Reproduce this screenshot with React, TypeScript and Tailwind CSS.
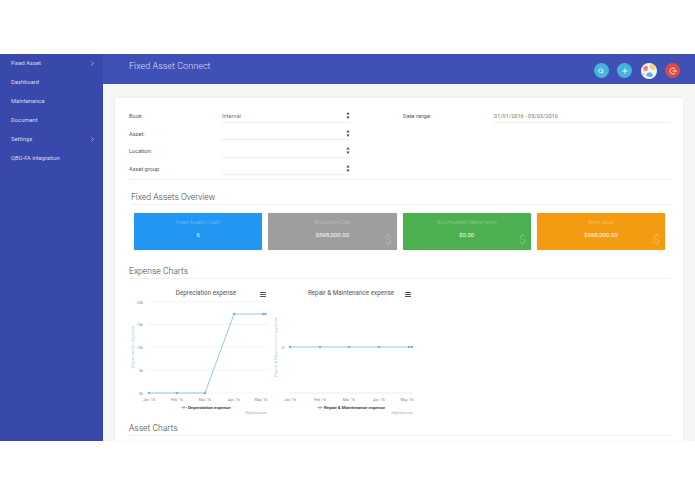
import { ChevronRight, Plus, Search } from "lucide-react";

const navItems = [
  { label: "Fixed Asset", arrow: true },
  { label: "Dashboard" },
  { label: "Maintenance" },
  { label: "Document" },
  { label: "Settings", arrow: true },
  { label: "QBO-FA integration" },
];

const selects = [
  { label: "Book:", value: "Internal" },
  { label: "Asset:", value: "" },
  { label: "Location:", value: "" },
  { label: "Asset group:", value: "" },
];

const stats = [
  { title: "Fixed Assets Count", value: "6", color: "bg-[#2196f3]", dollar: false },
  { title: "Acquisition Cost", value: "$868,000.00", color: "bg-[#9e9e9e]", dollar: true },
  { title: "Accumulated Depreciation", value: "$0.00", color: "bg-[#4caf50]", dollar: true },
  { title: "Book value", value: "$868,000.00", color: "bg-[#f39c12]", dollar: true },
];

const months = ["Jan '16", "Feb '16", "Mar '16", "Apr '16", "May '16"];

function Menu({ x }: { x: number }) {
  return (
    <g fill="#555">
      <rect x={x} y={7} width={6} height={1} />
      <rect x={x} y={9} width={6} height={1} />
      <rect x={x} y={11} width={6} height={1} />
    </g>
  );
}

function DepreciationChart() {
  const xs = [24, 52, 80, 109, 138, 140.5];
  const ys = [108, 108, 108, 29, 29, 29];
  const grid = [
    { y: 17, label: "20k" },
    { y: 39.5, label: "15k" },
    { y: 62, label: "10k" },
    { y: 85, label: "5k" },
    { y: 108, label: "0k" },
  ];
  return (
    <svg width="146" height="132" viewBox="0 0 146 132" className="shrink-0">
      <text x="81" y="10" textAnchor="middle" fontSize="6.3" fill="#555">Depreciation expense</text>
      <Menu x={135} />
      {grid.map((g) => (
        <g key={g.y}>
          <line x1="23" x2="143" y1={g.y} y2={g.y} stroke="#eceff3" strokeWidth="0.7" />
          <text x="18" y={g.y + 1.5} textAnchor="end" fontSize="3.8" fill="#888">{g.label}</text>
        </g>
      ))}
      <text transform="translate(8.5 62) rotate(-90)" textAnchor="middle" fontSize="4.4" fill="#a9d3f2">Depreciation expense</text>
      <polyline points={xs.map((x, i) => `${x},${ys[i]}`).join(" ")} fill="none" stroke="#8fbfea" strokeWidth="0.9" />
      {xs.map((x, i) => (
        <circle key={i} cx={x} cy={ys[i]} r="1.3" fill="#7cb5ec" />
      ))}
      {months.map((m, i) => (
        <text key={m} x={[24, 52, 80, 109, 136][i]} y="115.5" textAnchor="middle" fontSize="3.8" fill="#888">{m}</text>
      ))}
      <circle cx="59" cy="122.5" r="1.2" fill="#7cb5ec" />
      <line x1="56" x2="62" y1="122.5" y2="122.5" stroke="#7cb5ec" strokeWidth="0.7" />
      <text x="63" y="124" fontSize="4.4" fontWeight="700" fill="#444">Depreciation expense</text>
      <text x="142" y="129" textAnchor="end" fontSize="3" fill="#aaa">Highcharts.com</text>
    </svg>
  );
}

function RepairChart() {
  const xs = [19, 49, 78, 108, 138, 141];
  return (
    <svg width="146" height="132" viewBox="0 0 146 132" className="shrink-0">
      <text x="80" y="10" textAnchor="middle" fontSize="6.3" fill="#555">Repair &amp; Maintenance expense</text>
      <Menu x={134} />
      <text transform="translate(6 62) rotate(-90)" textAnchor="middle" fontSize="4.4" fill="#a9d3f2">Repair &amp; Maintenance expense</text>
      <text x="13" y="63.5" textAnchor="end" fontSize="3.8" fill="#888">0</text>
      <line x1="18" x2="142" y1="108" y2="108" stroke="#d8dde6" strokeWidth="0.6" />
      <line x1="18" x2="142" y1="62" y2="62" stroke="#8fbfea" strokeWidth="0.9" />
      {xs.map((x) => (
        <circle key={x} cx={x} cy="62" r="1.3" fill="#7cb5ec" />
      ))}
      {months.map((m, i) => (
        <text key={m} x={[19, 49, 78, 108, 136][i]} y="115.5" textAnchor="middle" fontSize="3.8" fill="#888">{m}</text>
      ))}
      <circle cx="49" cy="122.5" r="1.2" fill="#7cb5ec" />
      <line x1="46" x2="52" y1="122.5" y2="122.5" stroke="#7cb5ec" strokeWidth="0.7" />
      <text x="53" y="124" fontSize="4.4" fontWeight="700" fill="#444">Repair &amp; Maintenance expense</text>
      <text x="142" y="129" textAnchor="end" fontSize="3" fill="#aaa">Highcharts.com</text>
    </svg>
  );
}

function Avatar() {
  return (
    <svg width="16" height="16" viewBox="0 0 16 16">
      <circle cx="8" cy="8" r="8" fill="#f4f4f4" />
      <path d="M3 3.5 C5 2 7 3 7 5 C7 7 5 9 3.5 8 C2 7 2 4.5 3 3.5Z" fill="#ef7f7f" />
      <path d="M9 1.5 C11.5 1 14 3 14.5 6 C13 7.5 10.5 7 9.5 5 C9 4 8.5 2.5 9 1.5Z" fill="#f7d060" />
      <path d="M5 12 C6 10 8 9 9.5 9.5 C11 10 12 11.5 12 13 C10 14.5 7 14.5 5 12Z" fill="#5fb0ea" />
      <path d="M1.5 10 C2.5 10 3.5 11 3.5 12 C2.5 12 1.8 11 1.5 10Z" fill="#f0a04b" />
    </svg>
  );
}

function SelectArrows() {
  return (
    <svg width="4" height="7" viewBox="0 0 4 7" fill="#444">
      <path d="M2 0 L3.6 2.6 H0.4Z" />
      <path d="M2 7 L3.6 4.4 H0.4Z" />
    </svg>
  );
}

function SectionTitle({ children, className }: { children: string; className: string }) {
  return (
    <h2 className={`h-[15px] border-b border-[#f0f0f0] text-[8.6px] leading-[14px] font-light text-[#444] ${className}`}>
      {children}
    </h2>
  );
}

export default function App() {
  return (
    <div className="h-[494px] w-[695px] overflow-hidden bg-white pt-[54px] font-['Roboto',sans-serif]">
      <div className="flex h-[387px]">
        <aside className="w-[103px] shrink-0 bg-[#3949ab]">
          {navItems.map((item) => (
            <div key={item.label} className="flex h-[19px] items-center justify-between pl-[11px] pr-[7px] text-[5.8px] text-[#d6dbf1]">
              <span>{item.label}</span>
              {item.arrow && <ChevronRight size={7} strokeWidth={2} className="text-[#e8ebf8]" />}
            </div>
          ))}
        </aside>

        <div className="flex min-w-0 flex-1 flex-col">
          <header className="flex h-[30px] shrink-0 items-center justify-between bg-[#3f51b5] pl-[26px] pr-[15px]">
            <div className="mb-[4px] text-[9.1px] font-light text-[#d9ddf2]">Fixed Asset Connect</div>
            <div className="mt-[3px] flex items-center gap-[8.5px]">
              <div className="flex h-[15px] w-[15px] items-center justify-center rounded-full bg-[#45b4dc]">
                <Search size={6} strokeWidth={3} className="text-white" />
              </div>
              <div className="flex h-[15px] w-[15px] items-center justify-center rounded-full bg-[#45b4dc]">
                <Plus size={8} strokeWidth={2.5} className="text-white" />
              </div>
              <Avatar />
              <div className="flex h-[15px] w-[15px] items-center justify-center rounded-full bg-[#e0493f]">
                <svg width="8" height="8" viewBox="0 0 8 8" fill="none" stroke="#fff" strokeWidth="0.8">
                  <path d="M6.2 2 A3 3 0 1 0 6.2 6" />
                  <path d="M3.5 4 H7.2 M6 3 L7.2 4 L6 5" />
                </svg>
              </div>
            </div>
          </header>

          <main className="min-h-0 flex-1 bg-[#f5f6f6] px-[12px] pt-[14px]">
            <div className="h-full overflow-hidden bg-white pl-[14px] pr-[13px] pt-[7px] shadow-[0_0_2px_rgba(0,0,0,0.08)]">
              <div className="flex border-b border-[#f0f0f0] pb-[4px]">
                <div className="w-[221px] shrink-0">
                  {selects.map((s) => (
                    <div key={s.label} className="flex h-[17.5px] text-[5.6px] text-[#555]">
                      <span className="flex w-[93px] shrink-0 items-center pt-[5px]">{s.label}</span>
                      <div className="flex flex-1 items-center justify-between border-b border-[#eeeeee] pt-[5px] text-[#777]">
                        <span>{s.value}</span>
                        <SelectArrows />
                      </div>
                    </div>
                  ))}
                </div>
                <div className="ml-[53px] flex h-[17.5px] flex-1 text-[5.6px] text-[#555]">
                  <span className="flex w-[91px] shrink-0 items-center pt-[5px]">Date range:</span>
                  <div className="flex flex-1 items-center border-b border-[#eeeeee] pt-[5px] text-[#777]">
                    01/01/2016 - 05/03/2016
                  </div>
                </div>
              </div>

              <SectionTitle className="ml-[2px] mt-[10px]">Fixed Assets Overview</SectionTitle>

              <div className="mx-[5px] mt-[8px] grid grid-cols-4 gap-[6px]">
                {stats.map((s) => (
                  <div key={s.title} className={`relative flex h-[37px] flex-col items-center rounded-[1px] pt-[6px] shadow-[0_0_1px_rgba(0,0,0,0.3)] ${s.color}`}>
                    <div className="text-[5.2px] font-light text-white/45">{s.title}</div>
                    <div className="mt-[3px] text-[6.1px] text-white/90">{s.value}</div>
                    {s.dollar && <span className="absolute bottom-[1px] right-[5px] text-[12px] font-light text-white/30">$</span>}
                  </div>
                ))}
              </div>

              <SectionTitle className="mt-[14px]">Expense Charts</SectionTitle>

              <div className="-ml-[4px] mt-[6px] flex h-[132px] items-start">
                <DepreciationChart />
                <RepairChart />
              </div>

              <SectionTitle className="mt-[4px]">Asset Charts</SectionTitle>
            </div>
          </main>
        </div>
      </div>
    </div>
  );
}
